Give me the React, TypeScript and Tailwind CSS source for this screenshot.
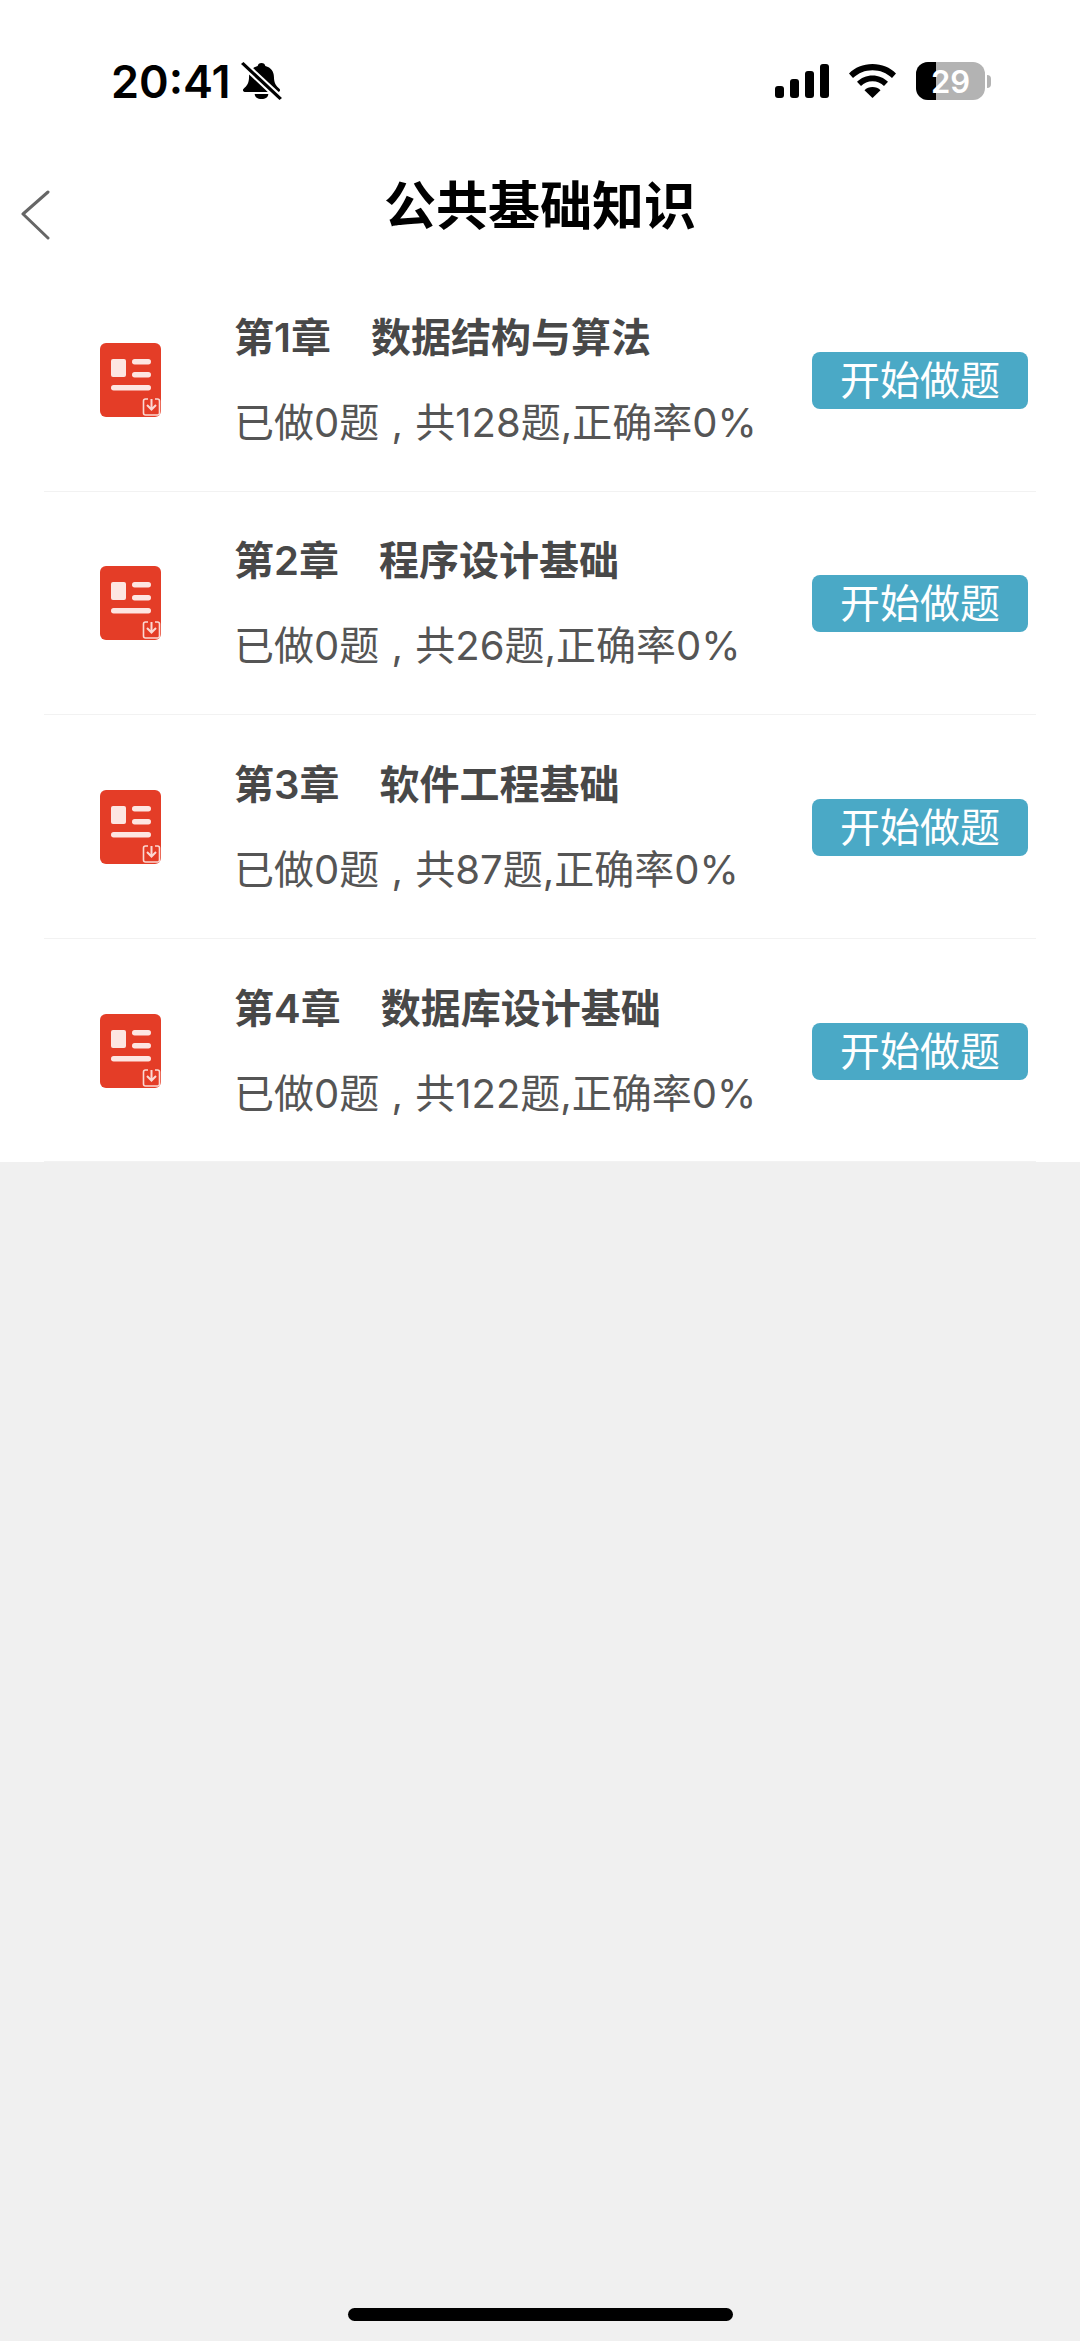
// App.tsx
const chapters = [
  { title: "第1章　数据结构与算法", total: 128 },
  { title: "第2章　程序设计基础", total: 26 },
  { title: "第3章　软件工程基础", total: 87 },
  { title: "第4章　数据库设计基础", total: 122 },
];

function DocIcon() {
  return (
    <svg width="62" height="75" viewBox="0 0 62 75" className="shrink-0">
      <rect x="0" y="0" width="61" height="74" rx="6" fill="#e43d27" />
      <rect x="11" y="16" width="15" height="18" rx="2" fill="#fde6e2" />
      <rect x="32" y="16" width="19" height="5.500" rx="2.700" fill="#fde6e2" />
      <rect x="32" y="29" width="19" height="5.500" rx="2.700" fill="#fde6e2" />
      <rect x="11" y="42" width="40" height="5.500" rx="2.700" fill="#fde6e2" />
      {/* download badge, open at the top */}
      <path d="M48 56H45.500a2 2 0 0 0-2 2V70a2 2 0 0 0 2 2H57.500a2 2 0 0 0 2-2V58a2 2 0 0 0-2-2H55" fill="none" stroke="#fbd9d3" strokeWidth="1.600" />
      <path d="M51.500 56v10M47 62l4.500 4.500L56 62" fill="none" stroke="#fbd9d3" strokeWidth="2" />
    </svg>
  );
}

function StatusBar() {
  return (
    <div className="flex h-[136px] items-start justify-between pl-[111px] pr-[89px] pt-[56px]">
      <div className="flex items-center gap-[9px]">
        <span className="text-[45px] leading-[52px] font-semibold text-black">20:41</span>
        {/* muted bell */}
        <svg width="43" height="40" viewBox="0 0 38 40" preserveAspectRatio="none">
          <path d="M19 1c2 0 3 1.300 3.400 3 5 1.500 7.600 5.500 7.600 11 0 6 2 9 5 12 1 1.500 0 3-2 3H5c-2 0-3-1.500-2-3 3-3 5-6 5-12 0-5.500 2.600-9.500 7.600-11C16 2.300 17 1 19 1z" fill="#000" />
          <path d="M13 32h12c0 3-2.500 5-6 5s-6-2-6-5z" fill="#000" />
          <path d="M2 1l34 36" stroke="#fff" strokeWidth="7" />
          <path d="M2 1l34 36" stroke="#000" strokeWidth="3" />
        </svg>
      </div>
      <div className="flex items-center gap-[20px] pt-[6px]">
        {/* signal bars */}
        <div className="flex h-[34px] items-end gap-[6px]">
          <div className="h-[12px] w-[9px] rounded-[3px] bg-black" />
          <div className="h-[19px] w-[9px] rounded-[3px] bg-black" />
          <div className="h-[27px] w-[9px] rounded-[3px] bg-black" />
          <div className="h-[34px] w-[9px] rounded-[3px] bg-black" />
        </div>
        <svg width="47" height="34" viewBox="0 0 47 34">
          <path d="M23.500 0C33 0 41 3.500 47 9.500l-4 4.500C37.500 9 31 6.300 23.500 6.300S9.500 9 4 14L0 9.500C6 3.500 14 0 23.500 0z" fill="#000" />
          <path d="M23.500 11.500c6 0 11.500 2.300 15.500 6.300l-4 4.300c-3-3-7-4.800-11.500-4.800S15 19 12 22.100l-4-4.300c4-4 9.500-6.300 15.500-6.300z" fill="#000" />
          <path d="M23.500 23c3.200 0 6 1.200 8 3.200L23.500 34l-8-7.800c2-2 4.800-3.200 8-3.200z" fill="#000" />
        </svg>
        <div className="flex items-center gap-[2px]">
          <div className="relative flex h-[38px] w-[69px] items-center justify-center overflow-hidden rounded-[12px] bg-[#b3b3b3]">
            <div className="absolute inset-y-0 left-0 w-[20px] bg-black" />
            <span className="relative text-[31px] leading-none font-semibold text-white">29</span>
          </div>
          <div className="h-[13px] w-[4px] rounded-r-full bg-[#b3b3b3]" />
        </div>
      </div>
    </div>
  );
}

function ChapterRow({ title, total }: { title: string; total: number }) {
  return (
    <div className="flex h-[223.6px] items-center border-b border-[#f2f2f2] pl-[56px] pr-[8px]">
      <div className="mr-[72px] mt-[2px]">
        <DocIcon />
      </div>
      <div className="flex-1 pt-[1px]">
        <div className="text-[40px] leading-[56px] font-semibold whitespace-pre text-[#484848]">{title}</div>
        <div className="mt-[30px] text-[40px] leading-[54px] whitespace-pre text-[#555555]">
          已做0题<span className="mx-[1px]"> , </span>共{total}题,正确率0%
        </div>
      </div>
      <button className="mt-[2px] h-[57px] w-[216px] rounded-[8px] bg-[#4aa9c6] text-center text-[40px] leading-[57px] text-white">
        开始做题
      </button>
    </div>
  );
}

export default function App() {
  return (
    <div className="relative flex h-[2341px] w-[1080px] flex-col overflow-hidden bg-[#f0f0f0] [font-family:Inter,'Noto_Sans_CJK_SC',sans-serif]">
      <div className="bg-white">
        <StatusBar />
        <div className="relative flex h-[132px] items-start justify-center">
          <svg width="32" height="52" viewBox="0 0 32 52" className="absolute left-[20px] top-[54px]">
            <path d="M28 2L3 24l25 24" fill="none" stroke="#666666" strokeWidth="3" strokeLinecap="round" strokeLinejoin="round" />
          </svg>
          <h1 className="mt-[41px] text-[52px] leading-[60px] font-bold text-black">公共基础知识</h1>
        </div>
        <div className="pl-[44px] pr-[44px]">
          {chapters.map((c) => (
            <ChapterRow key={c.title} title={c.title} total={c.total} />
          ))}
        </div>
      </div>
      {/* home indicator */}
      <div className="absolute bottom-[20px] left-[348px] h-[13px] w-[385px] rounded-full bg-black" />
    </div>
  );
}
